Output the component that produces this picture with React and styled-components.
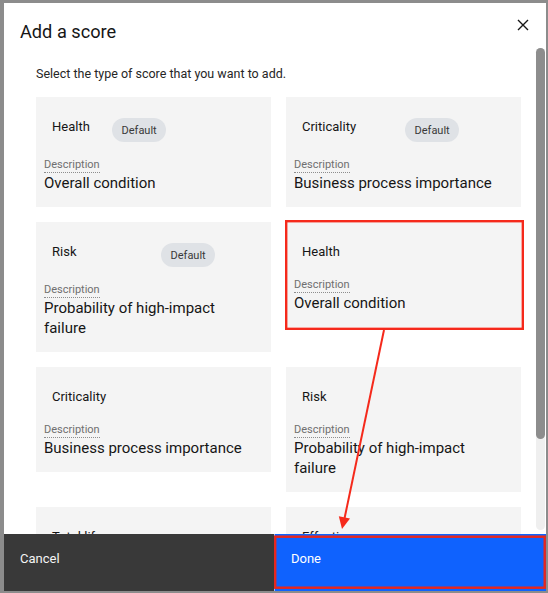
import styled, { createGlobalStyle } from "styled-components"

const GlobalStyle = createGlobalStyle`
  html, body {
    margin: 0;
    padding: 0;
    background: #8c8c8c;
  }
  * {
    box-sizing: border-box;
  }
`

const scores = [
  { name: "Health", description: "Overall condition", isDefault: true, titleWidth: 68 },
  { name: "Criticality", description: "Business process importance", isDefault: true, titleWidth: 111 },
  { name: "Risk", description: "Probability of high-impact failure", isDefault: true, titleWidth: 117 },
  { name: "Health", description: "Overall condition", selected: true },
  { name: "Criticality", description: "Business process importance" },
  { name: "Risk", description: "Probability of high-impact failure" },
  { name: "Total life", description: "Remaining useful life" },
  { name: "Effectiveness", description: "Maintenance effectiveness" },
]

const CloseIcon = () => (
  <svg width="16" height="16" viewBox="0 0 16 16" fill="none">
    <path d="M3 3L13 13M13 3L3 13" stroke="#161616" strokeWidth="1.4" />
  </svg>
)

const ScoreCard = ({ score }) => (
  <Card>
    <CardHeader>
      <CardTitle $width={score.isDefault ? score.titleWidth : null}>{score.name}</CardTitle>
      {score.isDefault && <Tag>Default</Tag>}
    </CardHeader>
    <Label>Description</Label>
    <Description>{score.description}</Description>
  </Card>
)

const App = () => {
  return (
    <Backdrop>
      <GlobalStyle />
      <Modal>
        <Header>
          <Title>Add a score</Title>
          <CloseButton aria-label="Close">
            <CloseIcon />
          </CloseButton>
        </Header>
        <Body>
          <Content>
            <Subtitle>Select the type of score that you want to add.</Subtitle>
            <CardGrid>
              {scores.map((score, i) => (
                <ScoreCard key={i} score={score} />
              ))}
            </CardGrid>
          </Content>
          <ScrollTrack>
            <ScrollThumb />
          </ScrollTrack>
        </Body>
        <Footer>
          <FooterButton $kind="secondary">Cancel</FooterButton>
          <FooterButton $kind="primary">Done</FooterButton>
        </Footer>
      </Modal>

      {/* red markup drawn over the screenshot */}
      <Annotations width="548" height="593" viewBox="0 0 548 593">
        <rect x="286.2" y="221.2" width="236.6" height="107.6" fill="none" stroke="#f5291b" strokeWidth="2.4" />
        <rect x="275.2" y="536.7" width="269.5" height="51" fill="none" stroke="#e8271c" strokeWidth="2.4" />
        <line x1="384" y1="330" x2="344.6" y2="518" stroke="#f5291b" strokeWidth="2" />
        <polygon points="342,529 338.8,516.2 350,518.5" fill="#f5291b" />
      </Annotations>
    </Backdrop>
  )
}

const Backdrop = styled.div`
  position: relative;
  width: 548px;
  height: 593px;
  padding: 3px 2px 2px 4px;
  background: #8c8c8c;
  font-family: Roboto, "Noto Sans", sans-serif;
  overflow: hidden;
`

const Modal = styled.div`
  display: flex;
  flex-direction: column;
  height: 588px;
  background: #ffffff;
  overflow: hidden;
`

const Header = styled.header`
  display: flex;
  justify-content: space-between;
  align-items: flex-start;
  height: 44px;
  flex-shrink: 0;
  padding: 0 15px 0 16px;
`

const Title = styled.h2`
  margin: 17px 0 0;
  font-size: 18.2px;
  line-height: 24px;
  font-weight: 400;
  color: #161616;
`

const CloseButton = styled.button`
  display: flex;
  width: 16px;
  height: 16px;
  margin-top: 14px;
  padding: 0;
  border: none;
  background: none;
`

const Body = styled.div`
  position: relative;
  flex: 1;
  overflow: hidden;
`

const Content = styled.div`
  padding: 17px 25px 0 32px;
`

const Subtitle = styled.p`
  margin: 0 0 13px;
  font-size: 12.5px;
  line-height: 20px;
  color: #262626;
`

const CardGrid = styled.div`
  display: grid;
  grid-template-columns: 1fr 1fr;
  gap: 15px;
  align-items: start;
`

const Card = styled.div`
  padding: 20px 16px 14px 8px;
  background: #f4f4f4;
`

const CardHeader = styled.div`
  display: flex;
  align-items: flex-start;
`

const CardTitle = styled.div`
  flex-shrink: 0;
  width: ${(p) => (p.$width ? `${p.$width}px` : "auto")};
  padding-left: 8px;
  font-size: 13px;
  line-height: 20px;
  color: #161616;
`

const Tag = styled.span`
  display: inline-flex;
  align-items: center;
  height: 24px;
  margin-top: 1px;
  padding: 0 9.5px;
  border-radius: 12px;
  background: #dfe2e6;
  font-size: 11px;
  color: #393939;
`

const Label = styled.span`
  display: inline-block;
  margin-top: 15px;
  font-size: 11px;
  line-height: 15px;
  color: #6f6f6f;
  border-bottom: 1px dotted #8d8d8d;
`

const Description = styled.div`
  font-size: 15px;
  line-height: 20px;
  color: #161616;
`

const ScrollTrack = styled.div`
  position: absolute;
  top: 1px;
  right: 1px;
  bottom: 4px;
  width: 9px;
  border-radius: 5px;
  background: #efefef;
`

const ScrollThumb = styled.div`
  height: 391px;
  border-radius: 5px;
  background: #8d8d8d;
`

const Footer = styled.footer`
  display: grid;
  grid-template-columns: 270px 1fr;
  height: 57px;
  flex-shrink: 0;
`

const FooterButton = styled.button`
  display: flex;
  align-items: flex-start;
  padding: 15px 16px 0;
  border: none;
  text-align: left;
  font-family: inherit;
  font-size: 13px;
  line-height: 20px;
  color: ${(p) => (p.$kind === "primary" ? "#ffffff" : "#f4f4f4")};
  background: ${(p) => (p.$kind === "primary" ? "#0f62fe" : "#393939")};
  border-left: ${(p) => (p.$kind === "primary" ? "1px solid #9fbcf7" : "none")};
`

const Annotations = styled.svg`
  position: absolute;
  top: 0;
  left: 0;
  pointer-events: none;
`

export default App
